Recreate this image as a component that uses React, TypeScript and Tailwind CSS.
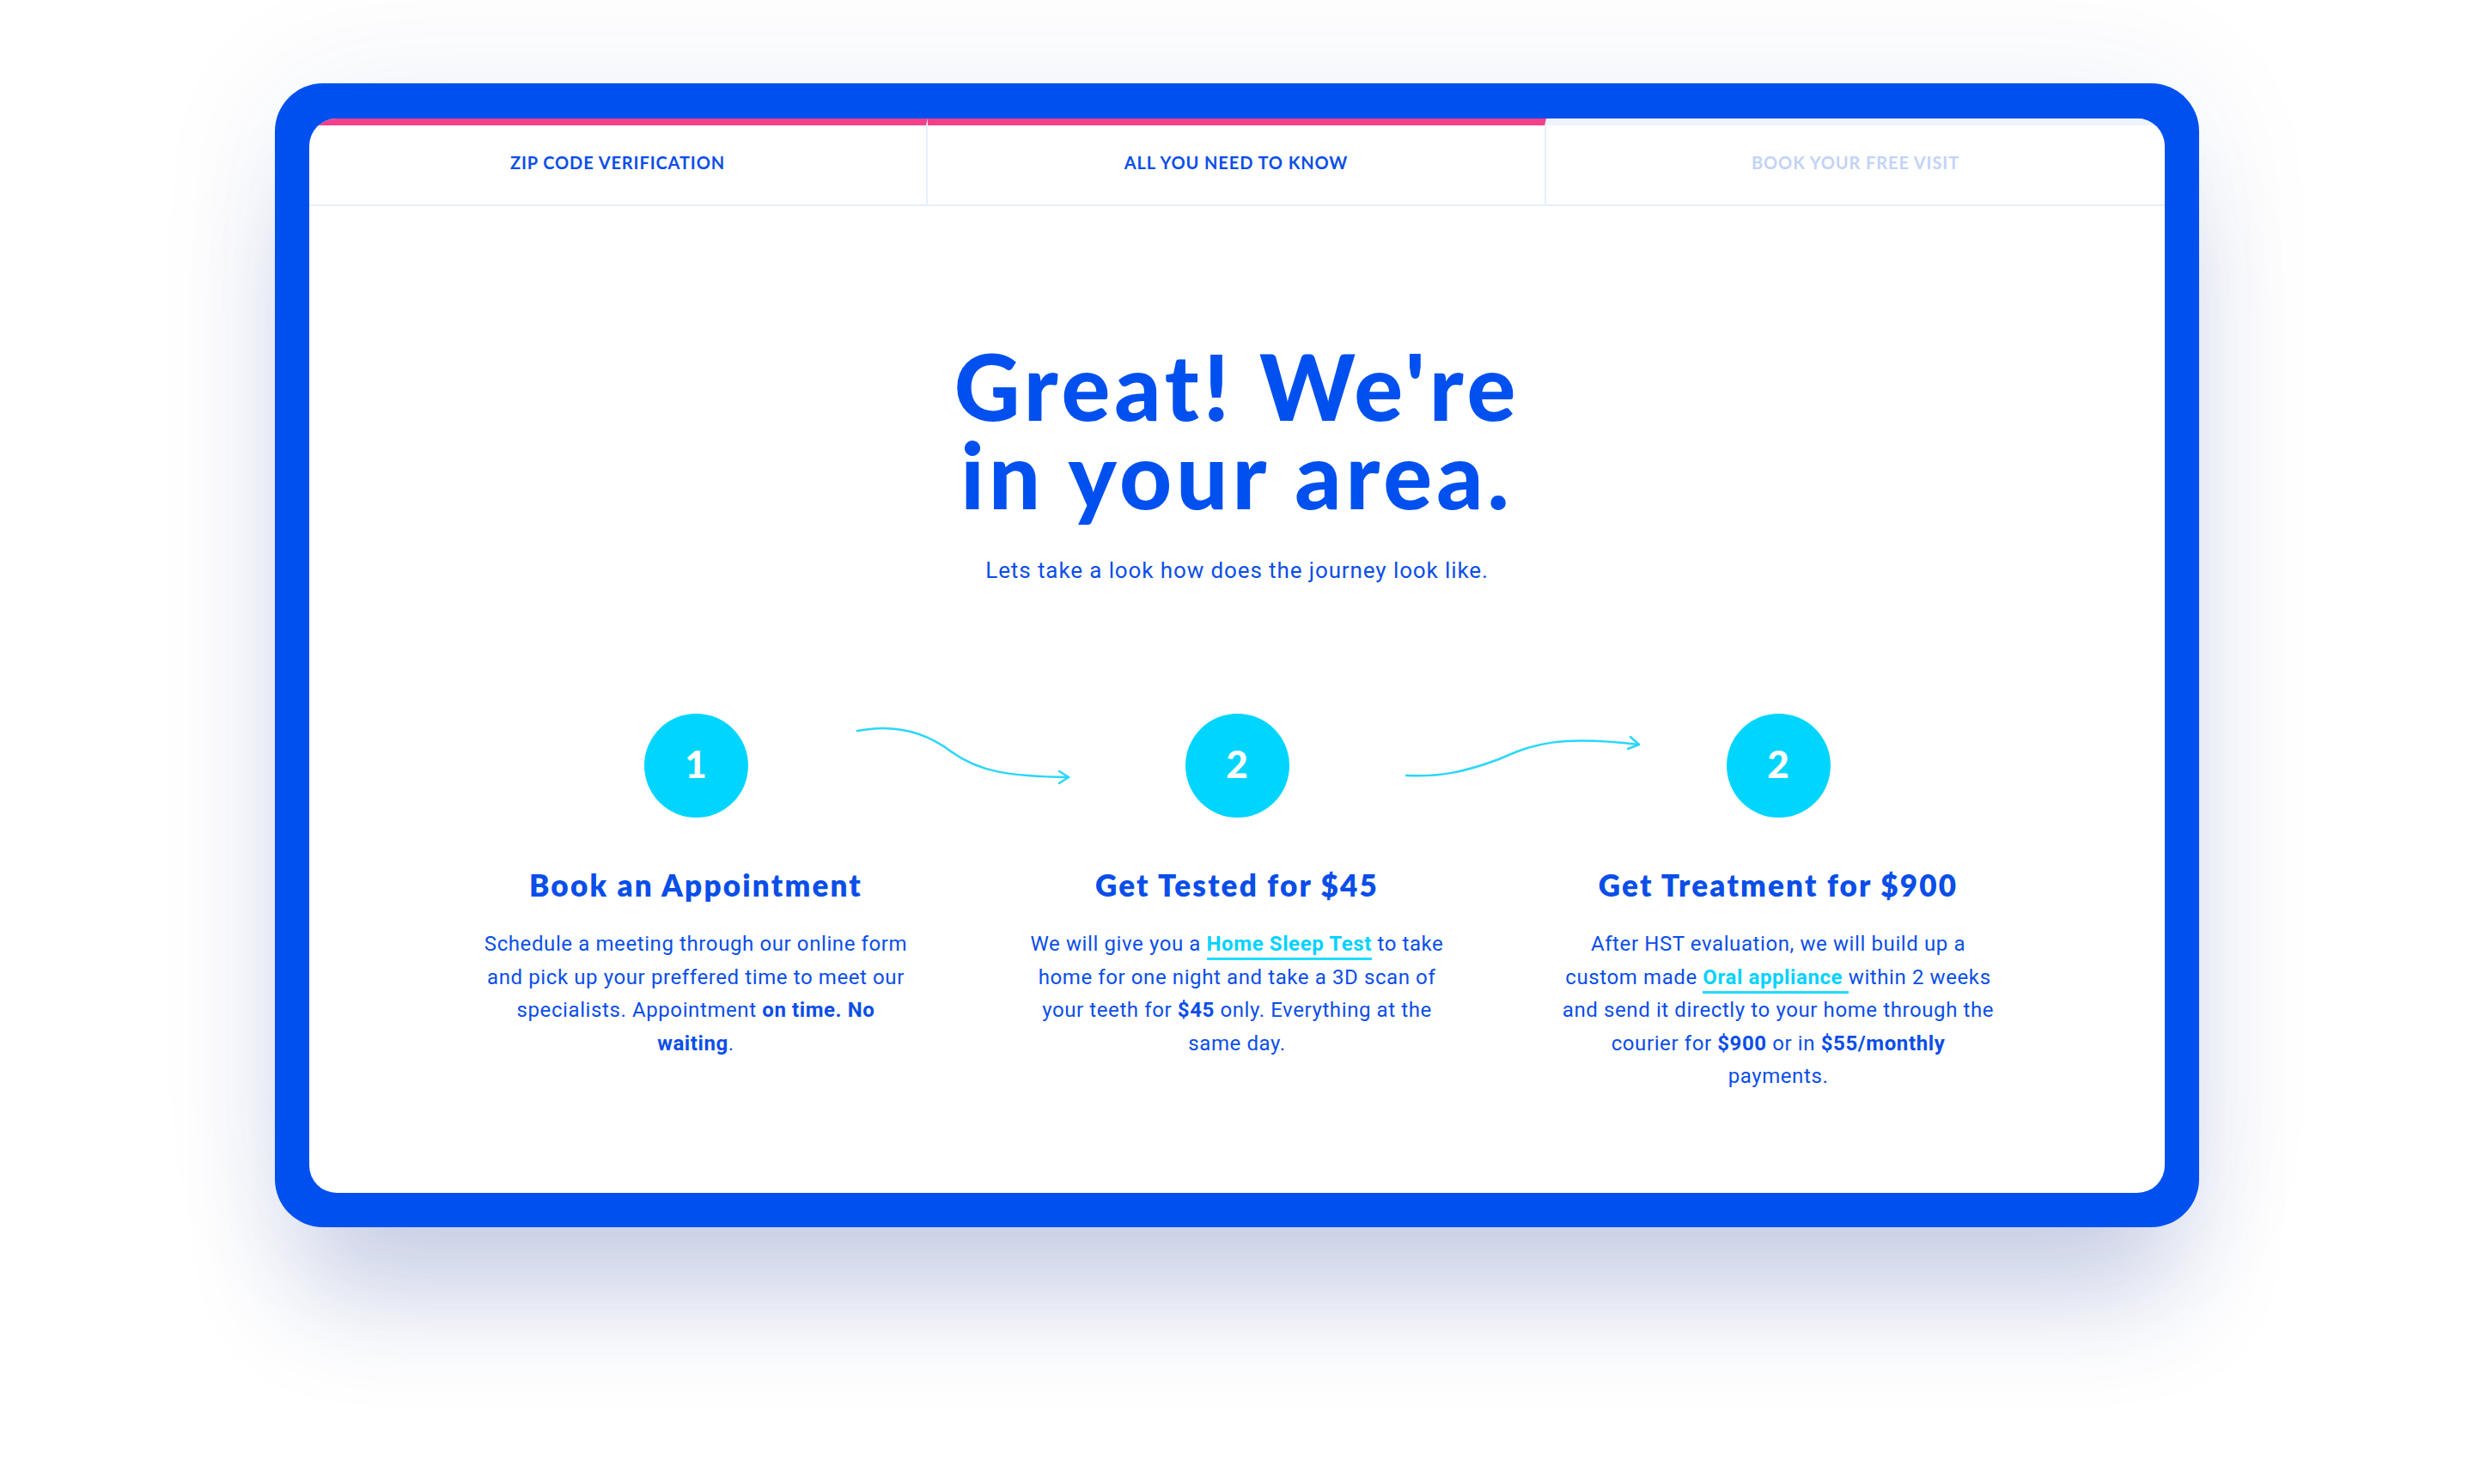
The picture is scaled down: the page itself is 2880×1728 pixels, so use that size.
import React from "react";

type Step = {
  num: string;
  title: string;
  body: React.ReactNode;
};

const heading = "font-['Lato',sans-serif]";
const body = "font-['Roboto',sans-serif]";

function Link({ children }: { children: React.ReactNode }) {
  return (
    <span className="border-b-[3px] border-[#1fdcff] pb-[2px] font-bold text-[#00d2ff]">{children}</span>
  );
}

const steps: Step[] = [
  {
    num: "1",
    title: "Book an Appointment",
    body: (
      <>
        Schedule a meeting through our online form
        <br />
        and pick up your preffered time to meet our
        <br />
        specialists. Appointment <b>on time. No</b>
        <br />
        <b>waiting</b>.
      </>
    ),
  },
  {
    num: "2",
    title: "Get Tested for $45",
    body: (
      <>
        We will give you a <Link>Home Sleep Test</Link> to take
        <br />
        home for one night and take a 3D scan of
        <br />
        your teeth for <b>$45</b> only. Everything at the
        <br />
        same day.
      </>
    ),
  },
  {
    num: "2",
    title: "Get Treatment for $900",
    body: (
      <>
        After HST evaluation, we will build up a
        <br />
        custom made <Link>Oral appliance </Link>within 2 weeks
        <br />
        and send it directly to your home through the
        <br />
        courier for <b>$900</b> or in <b>$55/monthly</b>
        <br />
        payments.
      </>
    ),
  },
];

const tabs = [
  { label: "ZIP CODE VERIFICATION", done: true },
  { label: "ALL YOU NEED TO KNOW", done: true },
  { label: "BOOK YOUR FREE VISIT", done: false },
];

export default function App() {
  return (
    <div className="h-[1728px] w-[2880px] overflow-hidden bg-white pl-[320px] pt-[97px]">
      <div className="h-[1332px] w-[2240px] rounded-[56px] bg-[#0050ef] px-[40px] pb-[40px] pt-[41px] shadow-[0_110px_130px_-30px_rgba(30,60,150,0.22),0_0_160px_rgba(30,60,150,0.07)]">
        <div className="flex h-full flex-col overflow-hidden rounded-[32px] bg-white">
          <div className="grid grid-cols-3 border-b-2 border-[#e6eefc]">
            {tabs.map((t, i) => (
              <div
                key={t.label}
                className={`flex h-[100px] items-center justify-center border-t-8 ${
                  t.done ? "border-t-[#f53f8a]" : "border-t-[#eef3fe]"
                } ${i < 2 ? "border-r-2 border-r-[#e8effc]" : ""}`}
              >
                <span
                  className={`${heading} pb-[6px] text-[20px] font-bold tracking-[0.9px] ${
                    t.done ? "text-[#0a4ee8]" : "text-[#c2d3f7]"
                  }`}
                >
                  {t.label}
                </span>
              </div>
            ))}
          </div>

          <h1
            className={`${heading} mt-[158px] text-center text-[106px] font-black leading-[103px] tracking-[5px] text-[#0050ef]`}
          >
            Great! We're
            <br />
            in your area.
          </h1>
          <p className={`${body} mt-[45px] text-center text-[26px] leading-[30px] tracking-[0.9px] text-[#0a4ee8]`}>
            Lets take a look how does the journey look like.
          </p>

          <div className="relative mx-auto mt-[152px] grid w-[1890px] grid-cols-3">
            <svg
              className="pointer-events-none absolute left-0 top-0"
              width="1890"
              height="121"
              viewBox="0 0 1890 121"
              fill="none"
              stroke="#2ad6fb"
              strokeWidth="2.5"
              strokeLinecap="round"
              strokeLinejoin="round"
            >
              <path d="M503 20 C545 12 580 20 612 44 C645 68 680 73 749 74" />
              <path d="M738 67 L749 74 L738 81" />
              <path d="M1142 72 C1180 74 1210 68 1250 53 C1290 35 1320 25 1413 36" />
              <path d="M1403 27 L1413 36 L1400 41" />
            </svg>
            {steps.map((s, i) => (
              <div key={i} className="flex flex-col items-center">
                <div
                  className={`${heading} flex h-[121px] w-[121px] items-center justify-center rounded-full bg-[#00d5ff] pb-[5px] text-[44px] font-black text-white`}
                >
                  {s.num}
                </div>
                <h3
                  className={`${heading} mt-[57px] text-[35px] font-extrabold leading-[42px] tracking-[2.2px] text-[#0a4ee8]`}
                >
                  {s.title}
                </h3>
                <p
                  className={`${body} mt-[29px] whitespace-nowrap text-center text-[24px] leading-[38.5px] tracking-[0.6px] text-[#0a4ee8] [&_b]:font-bold`}
                >
                  {s.body}
                </p>
              </div>
            ))}
          </div>
        </div>
      </div>
    </div>
  );
}
